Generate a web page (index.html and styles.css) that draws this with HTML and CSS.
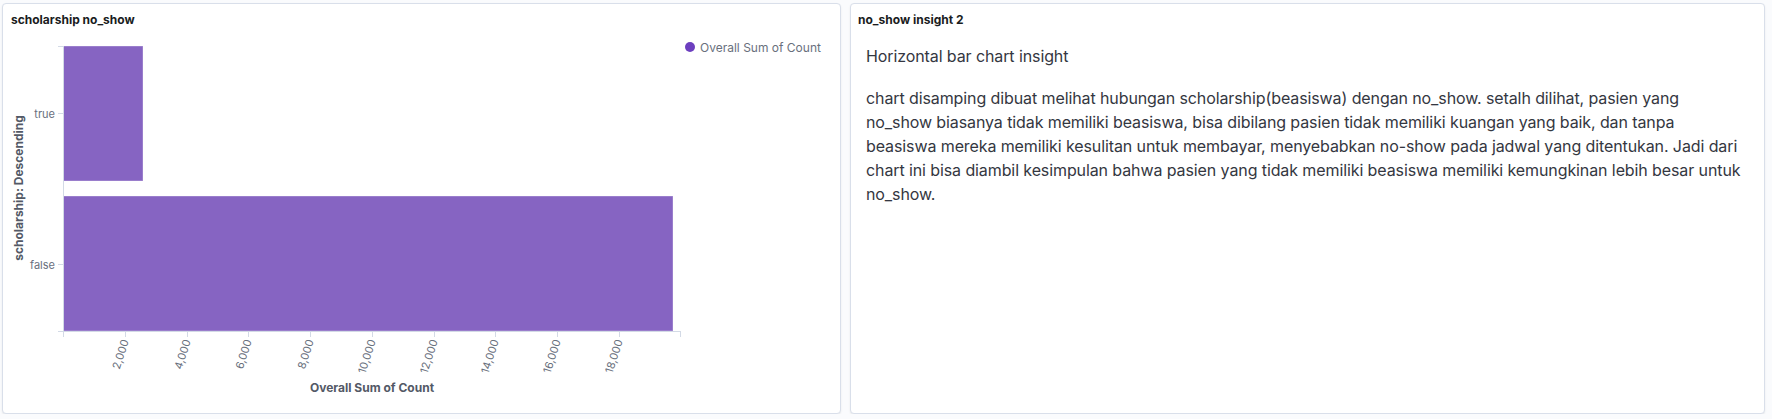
FILE: index.html
```html
<!DOCTYPE html>
<html lang="id">
<head>
<meta charset="utf-8">
<title>Dashboard</title>
<link rel="stylesheet" href="styles.css">
</head>
<body>
<div class="grid">
  <section class="panel panel-chart">
    <header class="panel-header"><h2 class="panel-title">scholarship no_show</h2></header>
    <svg class="chart" width="837" height="379" viewBox="0 0 837 379">
      <!-- bars -->
      <rect class="bar" x="60" y="12" width="80" height="135"/>
      <rect class="bar" x="60" y="162" width="610" height="135"/>
      <!-- axes -->
      <line class="axis" x1="60.5" y1="12" x2="60.5" y2="297.5"/>
      <line class="axis" x1="60" y1="297.5" x2="677.5" y2="297.5"/>
      <!-- y ticks -->
      <line class="axis" x1="55" y1="12.5" x2="60" y2="12.5"/>
      <line class="axis" x1="55" y1="79.5" x2="60" y2="79.5"/>
      <line class="axis" x1="55" y1="230.5" x2="60" y2="230.5"/>
      <line class="axis" x1="55" y1="297.5" x2="60" y2="297.5"/>
      <text class="tick" x="52" y="79.5" text-anchor="end" dominant-baseline="central">true</text>
      <text class="tick" x="52" y="230.5" text-anchor="end" dominant-baseline="central">false</text>
      <!-- x ticks -->
      <g class="xticks">
        <line class="axis" x1="60.5" y1="297" x2="60.5" y2="303"/>
        <line class="axis" x1="122.5" y1="297" x2="122.5" y2="303"/>
        <line class="axis" x1="184.5" y1="297" x2="184.5" y2="303"/>
        <line class="axis" x1="245.5" y1="297" x2="245.5" y2="303"/>
        <line class="axis" x1="307.5" y1="297" x2="307.5" y2="303"/>
        <line class="axis" x1="369.5" y1="297" x2="369.5" y2="303"/>
        <line class="axis" x1="431.5" y1="297" x2="431.5" y2="303"/>
        <line class="axis" x1="492.5" y1="297" x2="492.5" y2="303"/>
        <line class="axis" x1="554.5" y1="297" x2="554.5" y2="303"/>
        <line class="axis" x1="616.5" y1="297" x2="616.5" y2="303"/>
        <line class="axis" x1="677.5" y1="297" x2="677.5" y2="303"/>
      </g>
      <text class="tick" text-anchor="end" transform="translate(126,307) rotate(-72)">2,000</text>
      <text class="tick" text-anchor="end" transform="translate(188,307) rotate(-72)">4,000</text>
      <text class="tick" text-anchor="end" transform="translate(249,307) rotate(-72)">6,000</text>
      <text class="tick" text-anchor="end" transform="translate(311,307) rotate(-72)">8,000</text>
      <text class="tick" text-anchor="end" transform="translate(373,307) rotate(-72)">10,000</text>
      <text class="tick" text-anchor="end" transform="translate(435,307) rotate(-72)">12,000</text>
      <text class="tick" text-anchor="end" transform="translate(496,307) rotate(-72)">14,000</text>
      <text class="tick" text-anchor="end" transform="translate(558,307) rotate(-72)">16,000</text>
      <text class="tick" text-anchor="end" transform="translate(620,307) rotate(-72)">18,000</text>
      <!-- axis titles -->
      <text class="axis-title" x="369" y="353" text-anchor="middle" dominant-baseline="central">Overall Sum of Count</text>
      <text class="axis-title" text-anchor="middle" dominant-baseline="central" transform="translate(15,154) rotate(-90)">scholarship: Descending</text>
      <!-- legend -->
      <circle class="legend-dot" cx="687" cy="13" r="5"/>
      <text class="legend-text" x="697" y="13" dominant-baseline="central">Overall Sum of Count</text>
    </svg>
  </section>
  <section class="panel panel-text">
    <header class="panel-header"><h2 class="panel-title">no_show insight 2</h2></header>
    <div class="markdown">
      <p>Horizontal bar chart insight</p>
      <p>chart disamping dibuat melihat hubungan scholarship(beasiswa) dengan no_show. setalh dilihat, pasien yang no_show biasanya tidak memiliki beasiswa, bisa dibilang pasien tidak memiliki kuangan yang baik, dan tanpa beasiswa mereka memiliki kesulitan untuk membayar, menyebabkan no-show pada jadwal yang ditentukan. Jadi dari chart ini bisa diambil kesimpulan bahwa pasien yang tidak memiliki beasiswa memiliki kemungkinan lebih besar untuk no_show.</p>
    </div>
  </section>
</div>
</body>
</html>
```

FILE: styles.css
```css
html, body {
  margin: 0;
  padding: 0;
  background: #fafbfd;
  font-family: Inter, "Noto Sans", "Liberation Sans", sans-serif;
}

.grid {
  display: grid;
  grid-template-columns: 839px 915px;
  column-gap: 9px;
  padding: 3px 0 0 2px;
}

.panel {
  box-sizing: border-box;
  height: 411px;
  background: #ffffff;
  border: 1px solid #d9dfea;
  border-radius: 4px;
  box-shadow: 0 1px 2px rgba(0, 0, 0, 0.08);
  display: flex;
  flex-direction: column;
  overflow: hidden;
}

.panel-header {
  height: 30px;
  box-sizing: border-box;
  padding: 8px 8px 0 8px;
  flex: none;
}

.panel-text .panel-header {
  padding-left: 7px;
}

.panel-title {
  margin: 0;
  font-size: 12px;
  line-height: 16px;
  font-weight: 700;
  color: #1a1c21;
}

.chart {
  display: block;
}

.bar {
  fill: #8664c2;
  stroke: rgba(255, 255, 255, 0.35);
  stroke-width: 1;
}

.axis {
  stroke: #d3dae6;
  stroke-width: 1;
  shape-rendering: crispEdges;
}

.tick {
  font-family: Inter, "Noto Sans", sans-serif;
  font-size: 11px;
  fill: #69707d;
}

.axis-title {
  font-family: Inter, "Noto Sans", sans-serif;
  font-size: 12px;
  font-weight: 700;
  fill: #535966;
}

.legend-dot {
  fill: #6c3fbf;
}

.legend-text {
  font-family: Inter, "Noto Sans", sans-serif;
  font-size: 12px;
  fill: #69707d;
}

.markdown {
  padding: 10px 20px 0 15px;
  color: #343741;
  font-size: 16px;
  line-height: 24px;
  letter-spacing: -0.1px;
}

.markdown p {
  margin: 0 0 18px 0;
}
```
